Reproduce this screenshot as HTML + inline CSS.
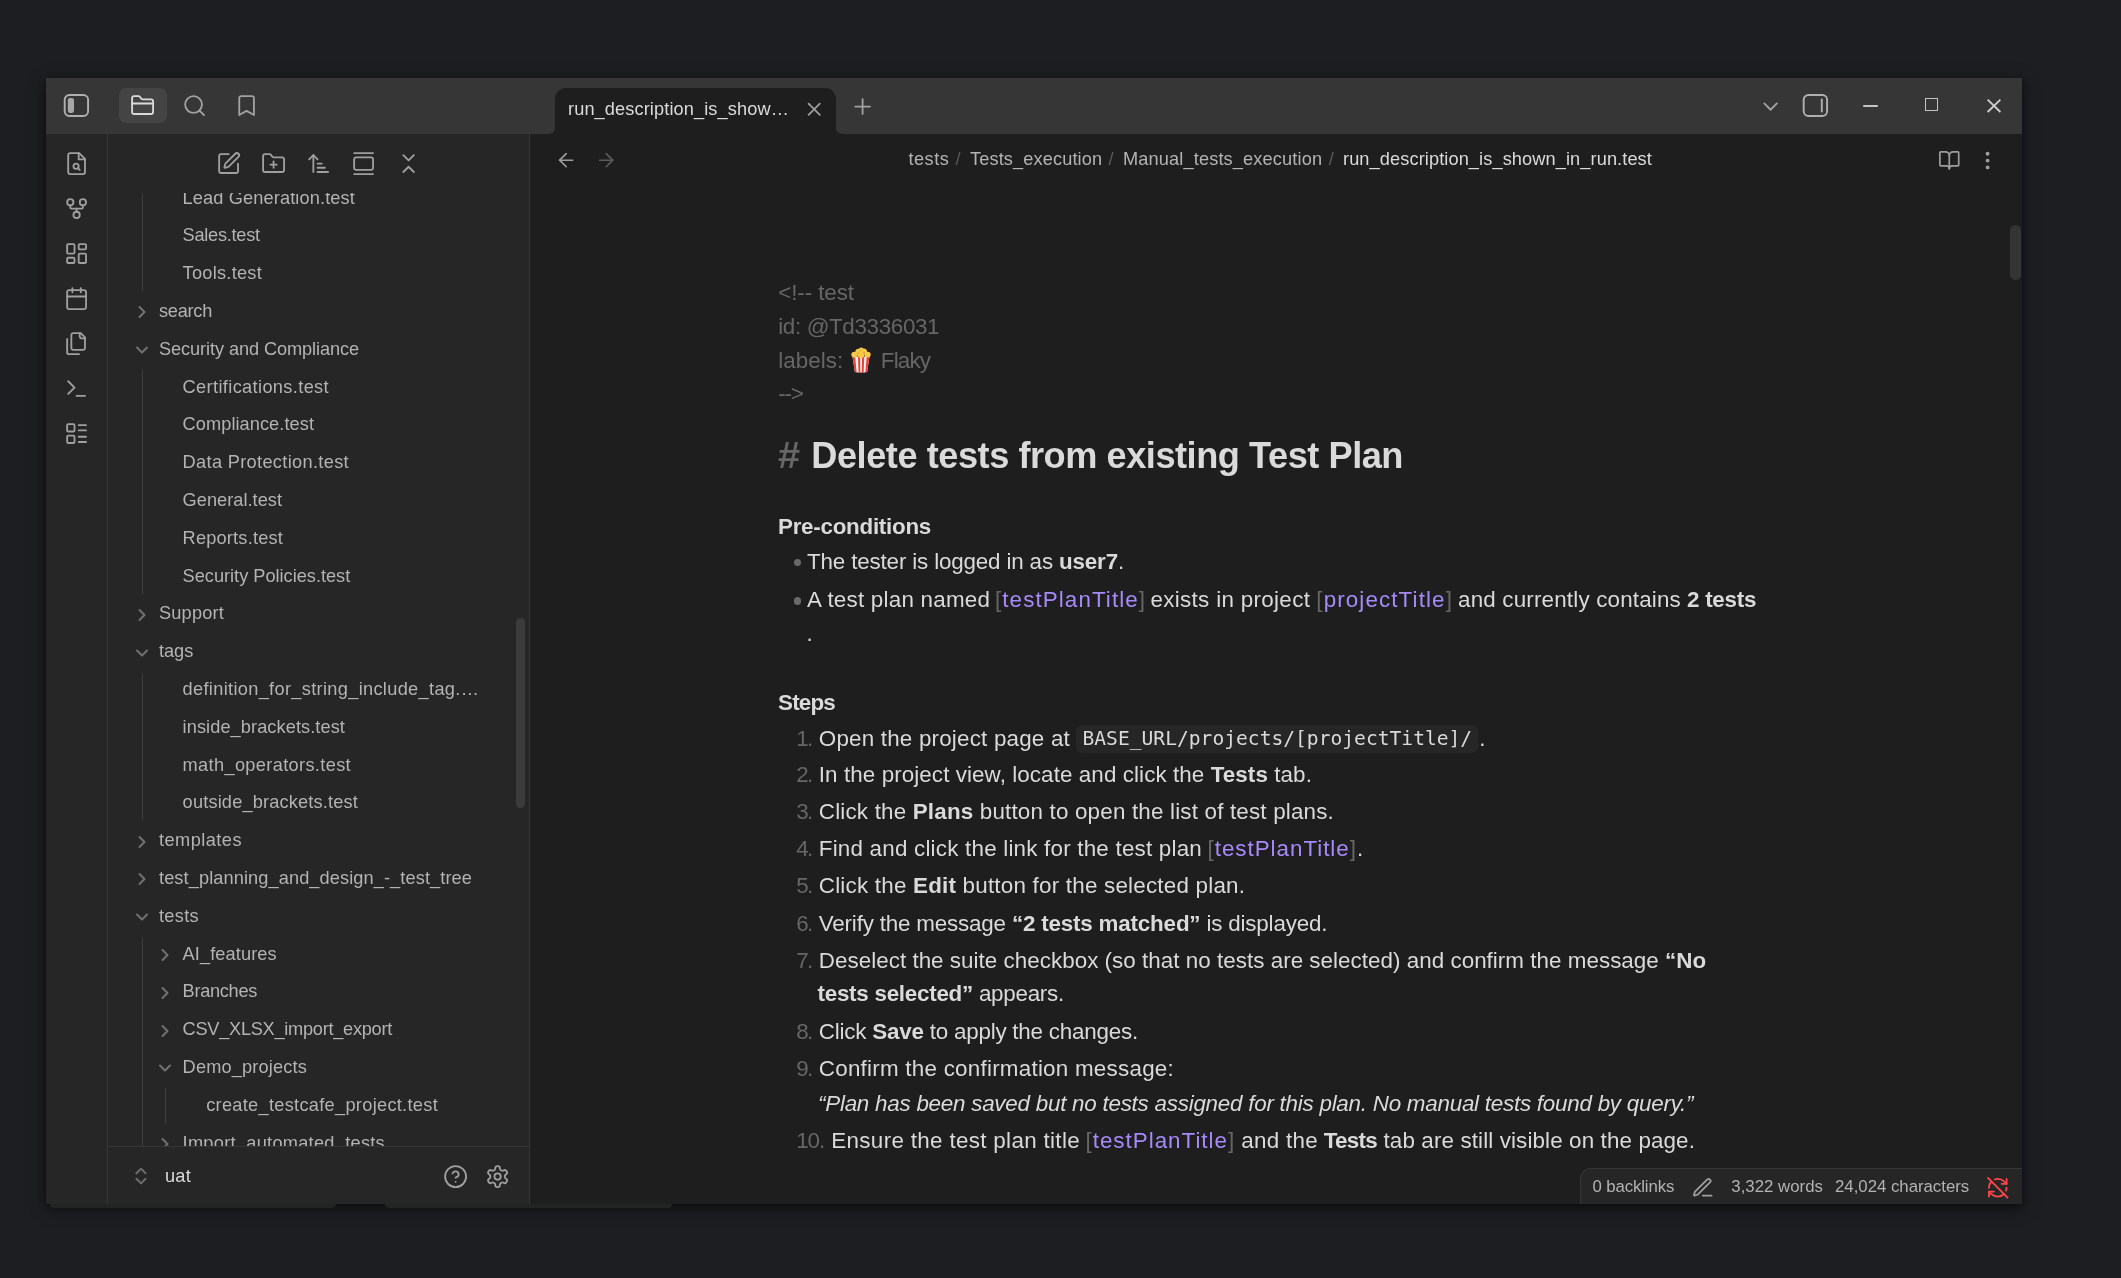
<!DOCTYPE html>
<html lang="en"><head><meta charset="utf-8"><title>run_description_is_shown_in_run.test - uat - Obsidian</title>
<style>
html,body{margin:0;padding:0}
body{width:2121px;height:1278px;overflow:hidden;position:relative;background:#1d1e22;font-family:'Liberation Sans', sans-serif;-webkit-font-smoothing:antialiased}
svg{display:block;overflow:visible}
b{font-weight:700}
.lk{color:#a68af9}
.ft{color:#666666}
</style></head><body>
<div style="position:absolute;left:0;top:0;width:2121px;height:1278px;will-change:transform">
<div style="position:absolute;left:46px;top:78px;width:1976px;height:1126px;background:#1e1e1e;box-shadow:0 4px 13px 1px rgba(0,0,0,.5), 0 1px 3px rgba(0,0,0,.3);"></div>
<div style="position:absolute;left:46px;top:78px;width:1976px;height:56px;background:#363636;"></div>
<div style="position:absolute;left:46px;top:134px;width:61px;height:1070px;background:#262626;"></div>
<div style="position:absolute;left:107px;top:134px;width:1px;height:1070px;background:#363636;"></div>
<div style="position:absolute;left:108px;top:134px;width:421px;height:1070px;background:#262626;"></div>
<div style="position:absolute;left:529px;top:134px;width:1px;height:1070px;background:#363636;"></div>
<div style="position:absolute;left:530px;top:134px;width:1492px;height:1070px;background:#1e1e1e;"></div>
<div style="position:absolute;left:50px;top:1204px;width:286px;height:4px;background:#222423;border-radius:0 0 4px 4px;"></div>
<div style="position:absolute;left:385px;top:1204px;width:287px;height:4px;background:#222423;border-radius:0 0 4px 4px;"></div>
<div style="position:absolute;left:555px;top:88px;width:281px;height:46px;background:#1e1e1e;border-radius:11px 11px 0 0"></div>
<svg style="position:absolute;left:548px;top:126px" width="8" height="8" viewBox="0 0 8 8"><path d="M0 8 H8 V0 A8 8 0 0 1 0 8Z" fill="#1e1e1e"/></svg>
<svg style="position:absolute;left:835px;top:126px" width="8" height="8" viewBox="0 0 8 8"><path d="M8 8 H0 V0 A8 8 0 0 0 8 8Z" fill="#1e1e1e"/></svg>
<div id="t1" style="position:absolute;left:568.00px;top:96.39px;font-family:'Liberation Sans', sans-serif;font-size:18.2px;line-height:27px;color:#dadada;font-weight:400;white-space:nowrap;letter-spacing:0.109px;">run_description_is_show…</div>
<svg style="position:absolute;left:803.00px;top:98.30px;opacity:.86;" width="22.4" height="22.4" viewBox="0 0 24 24" fill="none" stroke="#b3b3b3" stroke-width="1.9" stroke-linecap="round" stroke-linejoin="round"><path d="M18 6 6 18"/><path d="m6 6 12 12"/></svg>
<svg style="position:absolute;left:850.00px;top:94.20px;opacity:.86;" width="25.2" height="25.2" viewBox="0 0 24 24" fill="none" stroke="#b3b3b3" stroke-width="1.75" stroke-linecap="round" stroke-linejoin="round"><path d="M5 12h14"/><path d="M12 5v14"/></svg>
<svg style="position:absolute;left:63.00px;top:92.00px;" width="27" height="27" viewBox="0 0 24 24" fill="none" stroke="#b0b0b0" stroke-width="1.7" stroke-linecap="round" stroke-linejoin="round"><rect x="1.5" y="2.65" width="20.8" height="18.7" rx="4.2"/><rect x="4.3" y="5.4" width="5.5" height="13.2" rx="1.9" fill="#a8a8a8" stroke="none"/></svg>
<div style="position:absolute;left:119px;top:88px;width:47.5px;height:34.7px;background:#444444;border-radius:7px;"></div>
<svg style="position:absolute;left:129.60px;top:93.30px;" width="25.2" height="25.2" viewBox="0 0 24 24" fill="none" stroke="#dadada" stroke-width="1.75" stroke-linecap="round" stroke-linejoin="round"><path d="M4 20h16a2 2 0 0 0 2-2V8a2 2 0 0 0-2-2h-7.93a2 2 0 0 1-1.66-.9l-.82-1.2A2 2 0 0 0 7.93 3H4a2 2 0 0 0-2 2v13c0 1.1.9 2 2 2Z"/><path d="M2 10h20"/></svg>
<svg style="position:absolute;left:182.40px;top:93.40px;opacity:.86;" width="25.2" height="25.2" viewBox="0 0 24 24" fill="none" stroke="#b3b3b3" stroke-width="1.75" stroke-linecap="round" stroke-linejoin="round"><circle cx="11" cy="11" r="8"/><path d="m21 21-4.3-4.3"/></svg>
<svg style="position:absolute;left:233.90px;top:92.90px;opacity:.86;" width="25.2" height="25.2" viewBox="0 0 24 24" fill="none" stroke="#b3b3b3" stroke-width="1.75" stroke-linecap="round" stroke-linejoin="round"><path d="m19 21-7-4-7 4V5a2 2 0 0 1 2-2h10a2 2 0 0 1 2 2v16z"/></svg>
<svg style="position:absolute;left:1757.90px;top:93.70px;opacity:.86;" width="25.2" height="25.2" viewBox="0 0 24 24" fill="none" stroke="#b3b3b3" stroke-width="1.75" stroke-linecap="round" stroke-linejoin="round"><path d="m6 9 6 6 6-6"/></svg>
<svg style="position:absolute;left:1801.50px;top:92.00px;" width="27" height="27" viewBox="0 0 24 24" fill="none" stroke="#b0b0b0" stroke-width="1.7" stroke-linecap="round" stroke-linejoin="round"><rect x="1.5" y="2.65" width="20.8" height="18.7" rx="4.2"/><path d="M17.6 6.6v10.8"/></svg>
<div style="position:absolute;left:1862.7px;top:104.9px;width:15px;height:2px;background:#c4c4c4;border-radius:1px;"></div>
<div style="position:absolute;left:1924.6px;top:98px;width:11.4px;height:11.2px;border:1.9px solid #c4c4c4;box-sizing:content-box"></div>
<svg style="position:absolute;left:1987px;top:98.8px" width="14" height="13.6" viewBox="0 0 14 13.6" stroke="#d0d0d0" stroke-width="1.8" fill="none"><path d="M0.6 0.6 13.4 13M13.4 0.6 0.6 13"/></svg>
<svg style="position:absolute;left:64.00px;top:150.60px;opacity:.86;" width="25.2" height="25.2" viewBox="0 0 24 24" fill="none" stroke="#b3b3b3" stroke-width="1.75" stroke-linecap="round" stroke-linejoin="round"><path d="M14.5 2H6a2 2 0 0 0-2 2v16a2 2 0 0 0 2 2h12a2 2 0 0 0 2-2V7.5L14.5 2z"/><polyline points="14 2 14 8 20 8"/><circle cx="11.5" cy="14.5" r="2.5"/><path d="M13.25 16.25 15 18"/></svg>
<svg style="position:absolute;left:64.00px;top:195.72px;opacity:.86;" width="25.2" height="25.2" viewBox="0 0 24 24" fill="none" stroke="#b3b3b3" stroke-width="1.75" stroke-linecap="round" stroke-linejoin="round"><circle cx="12" cy="18" r="3"/><circle cx="6" cy="6" r="3"/><circle cx="18" cy="6" r="3"/><path d="M18 9v2c0 .6-.4 1-1 1H7c-.6 0-1-.4-1-1V9"/><path d="M12 12v3"/></svg>
<svg style="position:absolute;left:64.00px;top:240.84px;opacity:.86;" width="25.2" height="25.2" viewBox="0 0 24 24" fill="none" stroke="#b3b3b3" stroke-width="1.75" stroke-linecap="round" stroke-linejoin="round"><rect width="7" height="9" x="3" y="3" rx="1"/><rect width="7" height="5" x="14" y="3" rx="1"/><rect width="7" height="9" x="14" y="12" rx="1"/><rect width="7" height="5" x="3" y="16" rx="1"/></svg>
<svg style="position:absolute;left:64.00px;top:285.96px;opacity:.86;" width="25.2" height="25.2" viewBox="0 0 24 24" fill="none" stroke="#b3b3b3" stroke-width="1.75" stroke-linecap="round" stroke-linejoin="round"><path d="M8 2v4"/><path d="M16 2v4"/><rect width="18" height="18" x="3" y="4" rx="2"/><path d="M3 10h18"/></svg>
<svg style="position:absolute;left:64.00px;top:331.08px;opacity:.86;" width="25.2" height="25.2" viewBox="0 0 24 24" fill="none" stroke="#b3b3b3" stroke-width="1.75" stroke-linecap="round" stroke-linejoin="round"><path d="M20 7h-3a2 2 0 0 1-2-2V2"/><path d="M9 18a2 2 0 0 1-2-2V4a2 2 0 0 1 2-2h7l4 4v10a2 2 0 0 1-2 2Z"/><path d="M3 7.6v12.8A1.6 1.6 0 0 0 4.600 22h9.8"/></svg>
<svg style="position:absolute;left:64.00px;top:376.20px;opacity:.86;" width="25.2" height="25.2" viewBox="0 0 24 24" fill="none" stroke="#b3b3b3" stroke-width="1.75" stroke-linecap="round" stroke-linejoin="round"><polyline points="4 17 10 11 4 5"/><line x1="12" x2="20" y1="19" y2="19"/></svg>
<svg style="position:absolute;left:64.00px;top:421.32px;opacity:.86;" width="25.2" height="25.2" viewBox="0 0 24 24" fill="none" stroke="#b3b3b3" stroke-width="1.75" stroke-linecap="round" stroke-linejoin="round"><rect width="7" height="7" x="3" y="3" rx="1"/><rect width="7" height="7" x="3" y="14" rx="1"/><path d="M14 4h7"/><path d="M14 9h7"/><path d="M14 15h7"/><path d="M14 20h7"/></svg>
<svg style="position:absolute;left:216.20px;top:150.60px;opacity:.86;" width="25.2" height="25.2" viewBox="0 0 24 24" fill="none" stroke="#b3b3b3" stroke-width="1.75" stroke-linecap="round" stroke-linejoin="round"><path d="M12 3H5a2 2 0 0 0-2 2v14a2 2 0 0 0 2 2h14a2 2 0 0 0 2-2v-7"/><path d="M18.375 2.625a1 1 0 0 1 3 3l-9.013 9.014a2 2 0 0 1-.853.505l-2.873.84a.5.5 0 0 1-.62-.62l.84-2.873a2 2 0 0 1 .506-.852z"/></svg>
<svg style="position:absolute;left:261.00px;top:150.60px;opacity:.86;" width="25.2" height="25.2" viewBox="0 0 24 24" fill="none" stroke="#b3b3b3" stroke-width="1.75" stroke-linecap="round" stroke-linejoin="round"><path d="M12 10v6"/><path d="M9 13h6"/><path d="M20 20a2 2 0 0 0 2-2V8a2 2 0 0 0-2-2h-7.9a2 2 0 0 1-1.69-.9L9.6 3.9A2 2 0 0 0 7.93 3H4a2 2 0 0 0-2 2v13a2 2 0 0 0 2 2Z"/></svg>
<svg style="position:absolute;left:305.80px;top:150.60px;opacity:.86;" width="25.2" height="25.2" viewBox="0 0 24 24" fill="none" stroke="#b3b3b3" stroke-width="1.75" stroke-linecap="round" stroke-linejoin="round"><path d="m3 8 4-4 4 4"/><path d="M7 4v16"/><path d="M11 12h4"/><path d="M11 16h7"/><path d="M11 20h10"/></svg>
<svg style="position:absolute;left:350.60px;top:150.60px;opacity:.86;" width="25.2" height="25.2" viewBox="0 0 24 24" fill="none" stroke="#b3b3b3" stroke-width="1.75" stroke-linecap="round" stroke-linejoin="round"><path d="M3 2h18"/><path d="M3 22h18"/><rect width="18" height="12" x="3" y="6" rx="2"/></svg>
<svg style="position:absolute;left:396.30px;top:150.60px;opacity:.86;" width="25.2" height="25.2" viewBox="0 0 24 24" fill="none" stroke="#b3b3b3" stroke-width="1.75" stroke-linecap="round" stroke-linejoin="round"><path d="m7 20 5-5 5 5"/><path d="m7 4 5 5 5-5"/></svg>
<div style="position:absolute;left:108px;top:193px;width:420px;height:953px;overflow:hidden">
<div id="t2" style="position:absolute;left:74.60px;top:-8.41px;font-family:'Liberation Sans', sans-serif;font-size:18.2px;line-height:27px;color:#b3b3b3;font-weight:400;white-space:nowrap;letter-spacing:0.126px;">Lead Generation.test</div>
<div id="t3" style="position:absolute;left:74.60px;top:29.39px;font-family:'Liberation Sans', sans-serif;font-size:18.2px;line-height:27px;color:#b3b3b3;font-weight:400;white-space:nowrap;letter-spacing:-0.268px;">Sales.test</div>
<div id="t4" style="position:absolute;left:74.60px;top:67.19px;font-family:'Liberation Sans', sans-serif;font-size:18.2px;line-height:27px;color:#b3b3b3;font-weight:400;white-space:nowrap;letter-spacing:0.257px;">Tools.test</div>
<svg style="position:absolute;left:24.00px;top:109.30px" width="20" height="20" viewBox="0 0 24 24" fill="none" stroke="#717171" stroke-width="2.4" stroke-linecap="round" stroke-linejoin="round"><path d="m9 18 6-6-6-6"/></svg>
<div id="t5" style="position:absolute;left:51.00px;top:104.99px;font-family:'Liberation Sans', sans-serif;font-size:18.2px;line-height:27px;color:#b3b3b3;font-weight:400;white-space:nowrap;letter-spacing:-0.266px;">search</div>
<svg style="position:absolute;left:24.00px;top:147.10px" width="20" height="20" viewBox="0 0 24 24" fill="none" stroke="#717171" stroke-width="2.4" stroke-linecap="round" stroke-linejoin="round"><path d="m6 9 6 6 6-6"/></svg>
<div id="t6" style="position:absolute;left:51.00px;top:142.79px;font-family:'Liberation Sans', sans-serif;font-size:18.2px;line-height:27px;color:#b3b3b3;font-weight:400;white-space:nowrap;letter-spacing:-0.095px;">Security and Compliance</div>
<div id="t7" style="position:absolute;left:74.60px;top:180.59px;font-family:'Liberation Sans', sans-serif;font-size:18.2px;line-height:27px;color:#b3b3b3;font-weight:400;white-space:nowrap;letter-spacing:0.363px;">Certifications.test</div>
<div id="t8" style="position:absolute;left:74.60px;top:218.39px;font-family:'Liberation Sans', sans-serif;font-size:18.2px;line-height:27px;color:#b3b3b3;font-weight:400;white-space:nowrap;letter-spacing:0.067px;">Compliance.test</div>
<div id="t9" style="position:absolute;left:74.60px;top:256.19px;font-family:'Liberation Sans', sans-serif;font-size:18.2px;line-height:27px;color:#b3b3b3;font-weight:400;white-space:nowrap;letter-spacing:0.333px;">Data Protection.test</div>
<div id="t10" style="position:absolute;left:74.60px;top:293.99px;font-family:'Liberation Sans', sans-serif;font-size:18.2px;line-height:27px;color:#b3b3b3;font-weight:400;white-space:nowrap;letter-spacing:0.026px;">General.test</div>
<div id="t11" style="position:absolute;left:74.60px;top:331.79px;font-family:'Liberation Sans', sans-serif;font-size:18.2px;line-height:27px;color:#b3b3b3;font-weight:400;white-space:nowrap;letter-spacing:0.194px;">Reports.test</div>
<div id="t12" style="position:absolute;left:74.60px;top:369.59px;font-family:'Liberation Sans', sans-serif;font-size:18.2px;line-height:27px;color:#b3b3b3;font-weight:400;white-space:nowrap;letter-spacing:-0.008px;">Security Policies.test</div>
<svg style="position:absolute;left:24.00px;top:411.70px" width="20" height="20" viewBox="0 0 24 24" fill="none" stroke="#717171" stroke-width="2.4" stroke-linecap="round" stroke-linejoin="round"><path d="m9 18 6-6-6-6"/></svg>
<div id="t13" style="position:absolute;left:51.00px;top:407.39px;font-family:'Liberation Sans', sans-serif;font-size:18.2px;line-height:27px;color:#b3b3b3;font-weight:400;white-space:nowrap;letter-spacing:0.185px;">Support</div>
<svg style="position:absolute;left:24.00px;top:449.50px" width="20" height="20" viewBox="0 0 24 24" fill="none" stroke="#717171" stroke-width="2.4" stroke-linecap="round" stroke-linejoin="round"><path d="m6 9 6 6 6-6"/></svg>
<div id="t14" style="position:absolute;left:51.00px;top:445.19px;font-family:'Liberation Sans', sans-serif;font-size:18.2px;line-height:27px;color:#b3b3b3;font-weight:400;white-space:nowrap;letter-spacing:-0.048px;">tags</div>
<div id="t15" style="position:absolute;left:74.60px;top:482.99px;font-family:'Liberation Sans', sans-serif;font-size:18.2px;line-height:27px;color:#b3b3b3;font-weight:400;white-space:nowrap;letter-spacing:0.327px;">definition_for_string_include_tag.…</div>
<div id="t16" style="position:absolute;left:74.60px;top:520.79px;font-family:'Liberation Sans', sans-serif;font-size:18.2px;line-height:27px;color:#b3b3b3;font-weight:400;white-space:nowrap;letter-spacing:0.083px;">inside_brackets.test</div>
<div id="t17" style="position:absolute;left:74.60px;top:558.59px;font-family:'Liberation Sans', sans-serif;font-size:18.2px;line-height:27px;color:#b3b3b3;font-weight:400;white-space:nowrap;letter-spacing:0.349px;">math_operators.test</div>
<div id="t18" style="position:absolute;left:74.60px;top:596.39px;font-family:'Liberation Sans', sans-serif;font-size:18.2px;line-height:27px;color:#b3b3b3;font-weight:400;white-space:nowrap;letter-spacing:0.168px;">outside_brackets.test</div>
<svg style="position:absolute;left:24.00px;top:638.50px" width="20" height="20" viewBox="0 0 24 24" fill="none" stroke="#717171" stroke-width="2.4" stroke-linecap="round" stroke-linejoin="round"><path d="m9 18 6-6-6-6"/></svg>
<div id="t19" style="position:absolute;left:51.00px;top:634.19px;font-family:'Liberation Sans', sans-serif;font-size:18.2px;line-height:27px;color:#b3b3b3;font-weight:400;white-space:nowrap;letter-spacing:0.460px;">templates</div>
<svg style="position:absolute;left:24.00px;top:676.30px" width="20" height="20" viewBox="0 0 24 24" fill="none" stroke="#717171" stroke-width="2.4" stroke-linecap="round" stroke-linejoin="round"><path d="m9 18 6-6-6-6"/></svg>
<div id="t20" style="position:absolute;left:51.00px;top:671.99px;font-family:'Liberation Sans', sans-serif;font-size:18.2px;line-height:27px;color:#b3b3b3;font-weight:400;white-space:nowrap;letter-spacing:0.099px;">test_planning_and_design_-_test_tree</div>
<svg style="position:absolute;left:24.00px;top:714.10px" width="20" height="20" viewBox="0 0 24 24" fill="none" stroke="#717171" stroke-width="2.4" stroke-linecap="round" stroke-linejoin="round"><path d="m6 9 6 6 6-6"/></svg>
<div id="t21" style="position:absolute;left:51.00px;top:709.79px;font-family:'Liberation Sans', sans-serif;font-size:18.2px;line-height:27px;color:#b3b3b3;font-weight:400;white-space:nowrap;letter-spacing:0.316px;">tests</div>
<svg style="position:absolute;left:47.30px;top:751.90px" width="20" height="20" viewBox="0 0 24 24" fill="none" stroke="#717171" stroke-width="2.4" stroke-linecap="round" stroke-linejoin="round"><path d="m9 18 6-6-6-6"/></svg>
<div id="t22" style="position:absolute;left:74.60px;top:747.59px;font-family:'Liberation Sans', sans-serif;font-size:18.2px;line-height:27px;color:#b3b3b3;font-weight:400;white-space:nowrap;letter-spacing:0.107px;">AI_features</div>
<svg style="position:absolute;left:47.30px;top:789.70px" width="20" height="20" viewBox="0 0 24 24" fill="none" stroke="#717171" stroke-width="2.4" stroke-linecap="round" stroke-linejoin="round"><path d="m9 18 6-6-6-6"/></svg>
<div id="t23" style="position:absolute;left:74.60px;top:785.39px;font-family:'Liberation Sans', sans-serif;font-size:18.2px;line-height:27px;color:#b3b3b3;font-weight:400;white-space:nowrap;letter-spacing:-0.305px;">Branches</div>
<svg style="position:absolute;left:47.30px;top:827.50px" width="20" height="20" viewBox="0 0 24 24" fill="none" stroke="#717171" stroke-width="2.4" stroke-linecap="round" stroke-linejoin="round"><path d="m9 18 6-6-6-6"/></svg>
<div id="t24" style="position:absolute;left:74.60px;top:823.19px;font-family:'Liberation Sans', sans-serif;font-size:18.2px;line-height:27px;color:#b3b3b3;font-weight:400;white-space:nowrap;letter-spacing:-0.270px;">CSV_XLSX_import_export</div>
<svg style="position:absolute;left:47.30px;top:865.30px" width="20" height="20" viewBox="0 0 24 24" fill="none" stroke="#717171" stroke-width="2.4" stroke-linecap="round" stroke-linejoin="round"><path d="m6 9 6 6 6-6"/></svg>
<div id="t25" style="position:absolute;left:74.60px;top:860.99px;font-family:'Liberation Sans', sans-serif;font-size:18.2px;line-height:27px;color:#b3b3b3;font-weight:400;white-space:nowrap;letter-spacing:0.159px;">Demo_projects</div>
<div id="t26" style="position:absolute;left:98.20px;top:898.79px;font-family:'Liberation Sans', sans-serif;font-size:18.2px;line-height:27px;color:#b3b3b3;font-weight:400;white-space:nowrap;letter-spacing:0.299px;">create_testcafe_project.test</div>
<svg style="position:absolute;left:47.30px;top:940.90px" width="20" height="20" viewBox="0 0 24 24" fill="none" stroke="#717171" stroke-width="2.4" stroke-linecap="round" stroke-linejoin="round"><path d="m9 18 6-6-6-6"/></svg>
<div id="t27" style="position:absolute;left:74.60px;top:936.59px;font-family:'Liberation Sans', sans-serif;font-size:18.2px;line-height:27px;color:#b3b3b3;font-weight:400;white-space:nowrap;letter-spacing:0.285px;">Import_automated_tests</div>
<div style="position:absolute;left:34px;top:-13px;width:1px;height:110.5px;background:#3f3f3f"></div>
<div style="position:absolute;left:34px;top:175.5px;width:1px;height:225.5px;background:#3f3f3f"></div>
<div style="position:absolute;left:34px;top:479.5px;width:1px;height:147.5px;background:#3f3f3f"></div>
<div style="position:absolute;left:34px;top:744px;width:1px;height:213px;background:#3f3f3f"></div>
<div style="position:absolute;left:57px;top:894.5px;width:1px;height:36.5px;background:#3f3f3f"></div>
</div>
<div style="position:absolute;left:515.5px;top:618px;width:9.5px;height:189.5px;background:#3b3b3b;border-radius:5px;"></div>
<div style="position:absolute;left:108px;top:1146px;width:421px;height:1px;background:#363636;"></div>
<svg style="position:absolute;left:130.20px;top:1165.00px;" width="22" height="22" viewBox="0 0 24 24" fill="none" stroke="#6e6e6e" stroke-width="2.1" stroke-linecap="round" stroke-linejoin="round"><path d="m7 15 5 5 5-5"/><path d="m7 9 5-5 5 5"/></svg>
<div id="t28" style="position:absolute;left:165.00px;top:1162.69px;font-family:'Liberation Sans', sans-serif;font-size:18.2px;line-height:27px;color:#dadada;font-weight:400;white-space:nowrap;letter-spacing:0.234px;">uat</div>
<svg style="position:absolute;left:442.70px;top:1164.20px;opacity:.86;" width="25.2" height="25.2" viewBox="0 0 24 24" fill="none" stroke="#b3b3b3" stroke-width="1.75" stroke-linecap="round" stroke-linejoin="round"><circle cx="12" cy="12" r="10"/><path d="M9.09 9a3 3 0 0 1 5.83 1c0 2-3 3-3 3"/><path d="M12 17h.01"/></svg>
<svg style="position:absolute;left:485.40px;top:1164.20px;opacity:.86;" width="25.2" height="25.2" viewBox="0 0 24 24" fill="none" stroke="#b3b3b3" stroke-width="1.75" stroke-linecap="round" stroke-linejoin="round"><path d="M12.22 2h-.44a2 2 0 0 0-2 2v.18a2 2 0 0 1-1 1.73l-.43.25a2 2 0 0 1-2 0l-.15-.08a2 2 0 0 0-2.73.73l-.22.38a2 2 0 0 0 .73 2.73l.15.1a2 2 0 0 1 1 1.72v.51a2 2 0 0 1-1 1.74l-.15.09a2 2 0 0 0-.73 2.73l.22.38a2 2 0 0 0 2.73.73l.15-.08a2 2 0 0 1 2 0l.43.25a2 2 0 0 1 1 1.73V20a2 2 0 0 0 2 2h.44a2 2 0 0 0 2-2v-.18a2 2 0 0 1 1-1.73l.43-.25a2 2 0 0 1 2 0l.15.08a2 2 0 0 0 2.73-.73l.22-.39a2 2 0 0 0-.73-2.73l-.15-.08a2 2 0 0 1-1-1.74v-.5a2 2 0 0 1 1-1.74l.15-.09a2 2 0 0 0 .73-2.73l-.22-.38a2 2 0 0 0-2.73-.73l-.15.08a2 2 0 0 1-2 0l-.43-.25a2 2 0 0 1-1-1.73V4a2 2 0 0 0-2-2z"/><circle cx="12" cy="12" r="3"/></svg>
<svg style="position:absolute;left:555.20px;top:149.10px;opacity:.86;" width="22.4" height="22.4" viewBox="0 0 24 24" fill="none" stroke="#b3b3b3" stroke-width="1.75" stroke-linecap="round" stroke-linejoin="round"><path d="m12 19-7-7 7-7"/><path d="M19 12H5"/></svg>
<svg style="position:absolute;left:595.30px;top:149.10px;" width="22.4" height="22.4" viewBox="0 0 24 24" fill="none" stroke="#5c5c5c" stroke-width="1.75" stroke-linecap="round" stroke-linejoin="round"><path d="M5 12h14"/><path d="m12 5 7 7-7 7"/></svg>
<div id="t29" style="position:absolute;left:908.50px;top:145.89px;font-family:'Liberation Sans', sans-serif;font-size:18.2px;line-height:27px;color:#b3b3b3;font-weight:400;white-space:nowrap;letter-spacing:0.456px;">tests</div>
<div id="t30" style="position:absolute;left:955.60px;top:145.89px;font-family:'Liberation Sans', sans-serif;font-size:18.2px;line-height:27px;color:#5a5a5a;font-weight:400;white-space:nowrap;">/</div>
<div id="t31" style="position:absolute;left:970.00px;top:145.89px;font-family:'Liberation Sans', sans-serif;font-size:18.2px;line-height:27px;color:#b3b3b3;font-weight:400;white-space:nowrap;letter-spacing:0.119px;">Tests_execution</div>
<div id="t32" style="position:absolute;left:1108.40px;top:145.89px;font-family:'Liberation Sans', sans-serif;font-size:18.2px;line-height:27px;color:#5a5a5a;font-weight:400;white-space:nowrap;">/</div>
<div id="t33" style="position:absolute;left:1123.00px;top:145.89px;font-family:'Liberation Sans', sans-serif;font-size:18.2px;line-height:27px;color:#b3b3b3;font-weight:400;white-space:nowrap;letter-spacing:0.138px;">Manual_tests_execution</div>
<div id="t34" style="position:absolute;left:1328.80px;top:145.89px;font-family:'Liberation Sans', sans-serif;font-size:18.2px;line-height:27px;color:#5a5a5a;font-weight:400;white-space:nowrap;">/</div>
<div id="t35" style="position:absolute;left:1343.00px;top:145.89px;font-family:'Liberation Sans', sans-serif;font-size:18.2px;line-height:27px;color:#dadada;font-weight:400;white-space:nowrap;letter-spacing:0.101px;">run_description_is_shown_in_run.test</div>
<svg style="position:absolute;left:1937.90px;top:149.00px;opacity:.86;" width="22.6" height="22.6" viewBox="0 0 24 24" fill="none" stroke="#b3b3b3" stroke-width="1.8" stroke-linecap="round" stroke-linejoin="round"><path d="M12 7v14"/><path d="M3 18a1 1 0 0 1-1-1V4a1 1 0 0 1 1-1h5a4 4 0 0 1 4 4 4 4 0 0 1 4-4h5a1 1 0 0 1 1 1v13a1 1 0 0 1-1 1h-6a3 3 0 0 0-3 3 3 3 0 0 0-3-3z"/></svg>
<svg style="position:absolute;left:1975.40px;top:147.50px;opacity:.86;" width="25.2" height="25.2" viewBox="0 0 24 24" fill="none" stroke="#b3b3b3" stroke-width="1.9" stroke-linecap="round" stroke-linejoin="round"><circle cx="12" cy="12" r="0.9"/><circle cx="12" cy="5.5" r="0.9"/><circle cx="12" cy="18.5" r="0.9"/></svg>
<div style="position:absolute;left:2010px;top:225px;width:10.5px;height:54.5px;background:#343434;border-radius:5.5px;"></div>
<div style="position:absolute;left:530px;top:190px;width:1470px;height:1014px;overflow:hidden">
<div id="t36" style="position:absolute;left:248.20px;top:85.94px;font-family:'Liberation Sans', sans-serif;font-size:22.4px;line-height:34px;color:#666666;font-weight:400;white-space:nowrap;letter-spacing:-0.081px;">&lt;!-- test</div>
<div id="t37" style="position:absolute;left:248.20px;top:120.14px;font-family:'Liberation Sans', sans-serif;font-size:22.4px;line-height:34px;color:#666666;font-weight:400;white-space:nowrap;letter-spacing:-0.350px;">id: @Td3336031</div>
<div id="t38" style="position:absolute;left:248.20px;top:153.94px;font-family:'Liberation Sans', sans-serif;font-size:22.4px;line-height:34px;color:#666666;font-weight:400;white-space:nowrap;letter-spacing:0.039px;">labels:</div>
<svg role="img" aria-label="🍿" style="position:absolute;left:318.5px;top:157px" width="24" height="26" viewBox="0 0 22 26" preserveAspectRatio="none">
<path d="M3.2 9.5 L18.8 9.5 L16.6 25 Q11 26.2 5.4 25 Z" fill="#f4f1ec"/>
<path d="M3.2 9.5 L5.6 9.5 L7 25.4 L5.4 25 Z M8.2 9.5 L10.2 9.5 L10.4 25.8 L8.8 25.7 Z M12 9.5 L14 9.5 L13.4 25.7 L11.8 25.8 Z M16.2 9.5 L18.8 9.5 L16.6 25 L15 25.4 Z" fill="#e8403a"/>
<g fill="#f7c948"><circle cx="5" cy="7.6" r="2.9"/><circle cx="9" cy="5" r="3.2"/><circle cx="13.4" cy="4.6" r="3.1"/><circle cx="17" cy="7.6" r="2.9"/><circle cx="11" cy="8" r="3"/><circle cx="11.2" cy="2.6" r="2.2"/></g>
<g fill="#e6a12c"><circle cx="8.4" cy="6.2" r="0.9"/><circle cx="13.8" cy="6" r="0.9"/><circle cx="11" cy="3" r="0.7"/></g>
</svg>
<div id="t39" style="position:absolute;left:350.80px;top:153.94px;font-family:'Liberation Sans', sans-serif;font-size:22.4px;line-height:34px;color:#666666;font-weight:400;white-space:nowrap;letter-spacing:-0.820px;">Flaky</div>
<div id="t40" style="position:absolute;left:248.20px;top:187.14px;font-family:'Liberation Sans', sans-serif;font-size:22.4px;line-height:34px;color:#666666;font-weight:400;white-space:nowrap;letter-spacing:-1.233px;">--&gt;</div>
<div id="t41" style="position:absolute;left:248.20px;top:243.66px;font-family:'Liberation Sans', sans-serif;font-size:36.2px;line-height:44px;color:#666666;font-weight:700;white-space:nowrap;transform:scaleX(1.1);transform-origin:0 0;">#</div>
<div id="t42" style="position:absolute;left:281.30px;top:243.66px;font-family:'Liberation Sans', sans-serif;font-size:36.2px;line-height:44px;color:#dadada;font-weight:700;white-space:nowrap;letter-spacing:-0.471px;">Delete tests from existing Test Plan</div>
<div id="t43" style="position:absolute;left:248.00px;top:320.24px;font-family:'Liberation Sans', sans-serif;font-size:22.4px;line-height:34px;color:#dadada;font-weight:400;white-space:nowrap;letter-spacing:-0.268px;"><b>Pre-conditions</b></div>
<div style="position:absolute;left:263.9px;top:368.69999999999993px;width:7.2px;height:7.2px;border-radius:50%;background:#6a6a6a"></div>
<div id="t44" style="position:absolute;left:277.00px;top:354.74px;font-family:'Liberation Sans', sans-serif;font-size:22.4px;line-height:34px;color:#dadada;font-weight:400;white-space:nowrap;letter-spacing:-0.163px;">The tester is logged in as <b>user7</b>.</div>
<div style="position:absolute;left:263.9px;top:407.4px;width:7.2px;height:7.2px;border-radius:50%;background:#6a6a6a"></div>
<div id="t45" style="position:absolute;left:277.00px;top:393.44px;font-family:'Liberation Sans', sans-serif;font-size:22.4px;line-height:34px;color:#dadada;font-weight:400;white-space:nowrap;letter-spacing:0.232px;">A test plan named</div>
<div id="t46" style="position:absolute;left:465.00px;top:393.44px;font-family:'Liberation Sans', sans-serif;font-size:22.4px;line-height:34px;color:#dadada;font-weight:400;white-space:nowrap;letter-spacing:1.090px;"><span class="ft">[</span><span class="lk">testPlanTitle</span><span class="ft">]</span></div>
<div id="t47" style="position:absolute;left:620.50px;top:393.44px;font-family:'Liberation Sans', sans-serif;font-size:22.4px;line-height:34px;color:#dadada;font-weight:400;white-space:nowrap;letter-spacing:0.316px;">exists in project</div>
<div id="t48" style="position:absolute;left:786.30px;top:393.44px;font-family:'Liberation Sans', sans-serif;font-size:22.4px;line-height:34px;color:#dadada;font-weight:400;white-space:nowrap;letter-spacing:1.111px;"><span class="ft">[</span><span class="lk">projectTitle</span><span class="ft">]</span></div>
<div id="t49" style="position:absolute;left:928.00px;top:393.44px;font-family:'Liberation Sans', sans-serif;font-size:22.4px;line-height:34px;color:#dadada;font-weight:400;white-space:nowrap;letter-spacing:0.179px;">and currently contains</div>
<div id="t50" style="position:absolute;left:1157.00px;top:393.44px;font-family:'Liberation Sans', sans-serif;font-size:22.4px;line-height:34px;color:#dadada;font-weight:400;white-space:nowrap;letter-spacing:-0.252px;"><b>2 tests</b></div>
<div id="t51" style="position:absolute;left:276.50px;top:427.24px;font-family:'Liberation Sans', sans-serif;font-size:22.4px;line-height:34px;color:#dadada;font-weight:400;white-space:nowrap;">.</div>
<div id="t52" style="position:absolute;left:248.00px;top:496.44px;font-family:'Liberation Sans', sans-serif;font-size:22.4px;line-height:34px;color:#dadada;font-weight:400;white-space:nowrap;letter-spacing:-0.797px;"><b>Steps</b></div>
<div id="t53" style="position:absolute;left:266.30px;top:531.74px;font-family:'Liberation Sans', sans-serif;font-size:22.4px;line-height:34px;color:#666666;font-weight:400;white-space:nowrap;letter-spacing:-1.844px;">1.</div>
<div id="t54" style="position:absolute;left:288.80px;top:531.74px;font-family:'Liberation Sans', sans-serif;font-size:22.4px;line-height:34px;color:#dadada;font-weight:400;white-space:nowrap;letter-spacing:0.196px;">Open the project page at</div>
<div style="position:absolute;left:545.8px;top:535px;width:402.20000000000005px;height:28.3px;background:#262626;border-radius:5.6px"></div>
<div id="t55" style="position:absolute;left:552.50px;top:534.22px;font-family:'DejaVu Sans Mono', 'Liberation Mono', monospace;font-size:19.6px;line-height:30px;color:#dadada;font-weight:400;white-space:nowrap;letter-spacing:0.012px;">BASE_URL/projects/[projectTitle]/</div>
<div id="t56" style="position:absolute;left:949.20px;top:531.74px;font-family:'Liberation Sans', sans-serif;font-size:22.4px;line-height:34px;color:#dadada;font-weight:400;white-space:nowrap;">.</div>
<div id="t57" style="position:absolute;left:266.30px;top:568.44px;font-family:'Liberation Sans', sans-serif;font-size:22.4px;line-height:34px;color:#666666;font-weight:400;white-space:nowrap;letter-spacing:-1.844px;">2.</div>
<div id="t58" style="position:absolute;left:288.80px;top:568.44px;font-family:'Liberation Sans', sans-serif;font-size:22.4px;line-height:34px;color:#dadada;font-weight:400;white-space:nowrap;letter-spacing:0.085px;">In the project view, locate and click the <b>Tests</b> tab.</div>
<div id="t59" style="position:absolute;left:266.30px;top:605.24px;font-family:'Liberation Sans', sans-serif;font-size:22.4px;line-height:34px;color:#666666;font-weight:400;white-space:nowrap;letter-spacing:-1.844px;">3.</div>
<div id="t60" style="position:absolute;left:288.80px;top:605.24px;font-family:'Liberation Sans', sans-serif;font-size:22.4px;line-height:34px;color:#dadada;font-weight:400;white-space:nowrap;letter-spacing:0.183px;">Click the <b>Plans</b> button to open the list of test plans.</div>
<div id="t61" style="position:absolute;left:266.30px;top:642.24px;font-family:'Liberation Sans', sans-serif;font-size:22.4px;line-height:34px;color:#666666;font-weight:400;white-space:nowrap;letter-spacing:-1.844px;">4.</div>
<div id="t62" style="position:absolute;left:288.80px;top:642.24px;font-family:'Liberation Sans', sans-serif;font-size:22.4px;line-height:34px;color:#dadada;font-weight:400;white-space:nowrap;letter-spacing:0.209px;">Find and click the link for the test plan</div>
<div id="t63" style="position:absolute;left:677.50px;top:642.24px;font-family:'Liberation Sans', sans-serif;font-size:22.4px;line-height:34px;color:#dadada;font-weight:400;white-space:nowrap;letter-spacing:0.975px;"><span class="ft">[</span><span class="lk">testPlanTitle</span><span class="ft">]</span>.</div>
<div id="t64" style="position:absolute;left:266.30px;top:679.44px;font-family:'Liberation Sans', sans-serif;font-size:22.4px;line-height:34px;color:#666666;font-weight:400;white-space:nowrap;letter-spacing:-1.844px;">5.</div>
<div id="t65" style="position:absolute;left:288.80px;top:679.44px;font-family:'Liberation Sans', sans-serif;font-size:22.4px;line-height:34px;color:#dadada;font-weight:400;white-space:nowrap;letter-spacing:0.214px;">Click the <b>Edit</b> button for the selected plan.</div>
<div id="t66" style="position:absolute;left:266.30px;top:716.74px;font-family:'Liberation Sans', sans-serif;font-size:22.4px;line-height:34px;color:#666666;font-weight:400;white-space:nowrap;letter-spacing:-1.844px;">6.</div>
<div id="t67" style="position:absolute;left:288.80px;top:716.74px;font-family:'Liberation Sans', sans-serif;font-size:22.4px;line-height:34px;color:#dadada;font-weight:400;white-space:nowrap;letter-spacing:-0.186px;">Verify the message <b>“2 tests matched”</b> is displayed.</div>
<div id="t68" style="position:absolute;left:266.30px;top:753.94px;font-family:'Liberation Sans', sans-serif;font-size:22.4px;line-height:34px;color:#666666;font-weight:400;white-space:nowrap;letter-spacing:-1.844px;">7.</div>
<div id="t69" style="position:absolute;left:288.80px;top:753.94px;font-family:'Liberation Sans', sans-serif;font-size:22.4px;line-height:34px;color:#dadada;font-weight:400;white-space:nowrap;letter-spacing:0.029px;">Deselect the suite checkbox (so that no tests are selected) and confirm the message <b>“No</b></div>
<div id="t70" style="position:absolute;left:287.50px;top:787.24px;font-family:'Liberation Sans', sans-serif;font-size:22.4px;line-height:34px;color:#dadada;font-weight:400;white-space:nowrap;letter-spacing:-0.258px;"><b>tests selected”</b> appears.</div>
<div id="t71" style="position:absolute;left:266.30px;top:825.24px;font-family:'Liberation Sans', sans-serif;font-size:22.4px;line-height:34px;color:#666666;font-weight:400;white-space:nowrap;letter-spacing:-1.844px;">8.</div>
<div id="t72" style="position:absolute;left:288.80px;top:825.24px;font-family:'Liberation Sans', sans-serif;font-size:22.4px;line-height:34px;color:#dadada;font-weight:400;white-space:nowrap;letter-spacing:-0.217px;">Click <b>Save</b> to apply the changes.</div>
<div id="t73" style="position:absolute;left:266.30px;top:862.24px;font-family:'Liberation Sans', sans-serif;font-size:22.4px;line-height:34px;color:#666666;font-weight:400;white-space:nowrap;letter-spacing:-1.844px;">9.</div>
<div id="t74" style="position:absolute;left:288.80px;top:862.24px;font-family:'Liberation Sans', sans-serif;font-size:22.4px;line-height:34px;color:#dadada;font-weight:400;white-space:nowrap;letter-spacing:0.242px;">Confirm the confirmation message:</div>
<div id="t75" style="position:absolute;left:288.00px;top:897.24px;font-family:'Liberation Sans', sans-serif;font-size:22.4px;line-height:34px;color:#dadada;font-weight:400;white-space:nowrap;letter-spacing:-0.243px;"><i>“Plan has been saved but no tests assigned for this plan. No manual tests found by query.”</i></div>
<div id="t76" style="position:absolute;left:266.30px;top:934.24px;font-family:'Liberation Sans', sans-serif;font-size:22.4px;line-height:34px;color:#666666;font-weight:400;white-space:nowrap;letter-spacing:-1.147px;">10.</div>
<div id="t77" style="position:absolute;left:301.30px;top:934.24px;font-family:'Liberation Sans', sans-serif;font-size:22.4px;line-height:34px;color:#dadada;font-weight:400;white-space:nowrap;letter-spacing:0.326px;">Ensure the test plan title</div>
<div id="t78" style="position:absolute;left:555.50px;top:934.24px;font-family:'Liberation Sans', sans-serif;font-size:22.4px;line-height:34px;color:#dadada;font-weight:400;white-space:nowrap;letter-spacing:0.990px;"><span class="ft">[</span><span class="lk">testPlanTitle</span><span class="ft">]</span></div>
<div id="t79" style="position:absolute;left:711.30px;top:934.24px;font-family:'Liberation Sans', sans-serif;font-size:22.4px;line-height:34px;color:#dadada;font-weight:400;white-space:nowrap;letter-spacing:0.283px;">and the</div>
<div id="t80" style="position:absolute;left:793.80px;top:934.24px;font-family:'Liberation Sans', sans-serif;font-size:22.4px;line-height:34px;color:#dadada;font-weight:400;white-space:nowrap;letter-spacing:-0.729px;"><b>Tests</b></div>
<div id="t81" style="position:absolute;left:853.50px;top:934.24px;font-family:'Liberation Sans', sans-serif;font-size:22.4px;line-height:34px;color:#dadada;font-weight:400;white-space:nowrap;letter-spacing:0.120px;">tab are still visible on the page.</div>
<div id="t82" style="position:absolute;left:248.00px;top:1005.54px;font-family:'Liberation Sans', sans-serif;font-size:22.4px;line-height:34px;color:#dadada;font-weight:400;white-space:nowrap;letter-spacing:-1.200px;"><b>Expected results</b></div>
</div>
<div style="position:absolute;left:1580px;top:1168px;width:442px;height:36px;background:#262626;border-top:1px solid #363636;border-left:1px solid #363636;border-radius:11px 0 0 0;box-sizing:border-box"></div>
<div id="t83" style="position:absolute;left:1592.50px;top:1174.38px;font-family:'Liberation Sans', sans-serif;font-size:16.8px;line-height:25px;color:#b3b3b3;font-weight:400;white-space:nowrap;letter-spacing:-0.121px;">0 backlinks</div>
<svg style="position:absolute;left:1690.75px;top:1176.25px;opacity:.86;" width="23.5" height="23.5" viewBox="0 0 24 24" fill="none" stroke="#b3b3b3" stroke-width="1.8" stroke-linecap="round" stroke-linejoin="round"><path d="M12 20h9"/><path d="M16.376 3.622a1 1 0 0 1 3.002 3.002L7.368 18.635a2 2 0 0 1-.855.506l-2.872.838a.5.5 0 0 1-.62-.62l.838-2.872a2 2 0 0 1 .506-.854z"/></svg>
<div id="t84" style="position:absolute;left:1731.30px;top:1174.38px;font-family:'Liberation Sans', sans-serif;font-size:16.8px;line-height:25px;color:#b3b3b3;font-weight:400;white-space:nowrap;letter-spacing:0.025px;">3,322 words</div>
<div id="t85" style="position:absolute;left:1835.00px;top:1174.38px;font-family:'Liberation Sans', sans-serif;font-size:16.8px;line-height:25px;color:#b3b3b3;font-weight:400;white-space:nowrap;letter-spacing:-0.009px;">24,024 characters</div>
<svg style="position:absolute;left:1985.75px;top:1175.85px;" width="23.5" height="23.5" viewBox="0 0 24 24" fill="none" stroke="#fb464c" stroke-width="1.9" stroke-linecap="round" stroke-linejoin="round"><path d="M21 8L18.74 5.74A9.75 9.75 0 0 0 12 3C11 3 10.03 3.16 9.13 3.47"/><path d="M8 16H3v5"/><path d="M3 12C3 9.51 4 7.26 5.64 5.64"/><path d="m3 16 2.26 2.26A9.75 9.75 0 0 0 12 21c2.49 0 4.74-1 6.36-2.64"/><path d="M21 12c0 1-.16 1.97-.47 2.87"/><path d="M21 3v5h-5"/><path d="M22 22 2 2"/></svg>
</div>
</body></html>
